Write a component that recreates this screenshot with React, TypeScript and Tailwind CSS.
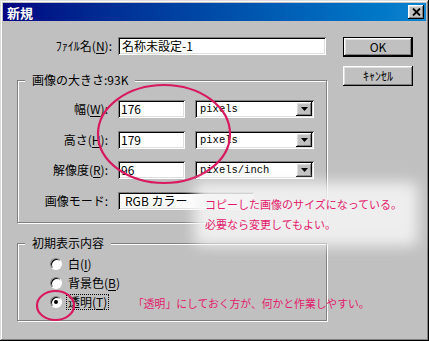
import React from "react";

const raised =
  "shadow-[inset_-1px_-1px_0_#000,inset_1px_1px_0_#fff,inset_-2px_-2px_0_#808080,inset_2px_2px_0_#dfdfdf]";
const sunken =
  "shadow-[inset_1px_1px_0_#808080,inset_-1px_-1px_0_#fff,inset_2px_2px_0_#000,inset_-2px_-2px_0_#dfdfdf]";
const etched = "border border-[#808080] shadow-[1px_1px_0_#fff,inset_1px_1px_0_#fff]";

function Acc({ pre, k, post = ")" }: { pre: string; k: string; post?: string }) {
  return (
    <span>
      {pre}(<span className="underline underline-offset-2">{k}</span>
      {post}
    </span>
  );
}

function Arrow() {
  return (
    <div className={`w-[16px] h-[14px] bg-[#c0c0c0] ${raised} flex items-center justify-center`}>
      <svg width="7" height="4" viewBox="0 0 7 4">
        <path d="M0 0h7L3.5 4z" fill="#000" />
      </svg>
    </div>
  );
}

function Combo({ w, text }: { w: string; text: string }) {
  return (
    <div className={`${w} h-[18px] bg-white ${sunken} flex items-center justify-between pl-[5px] pr-[2px]`}>
      <span className="text-[10.5px] font-['Liberation_Mono',monospace] leading-none">{text}</span>
      <Arrow />
    </div>
  );
}

function Radio({ checked, children, focus }: { checked?: boolean; children: React.ReactNode; focus?: boolean }) {
  return (
    <div className="h-[16px] flex items-center">
      <div className="w-[12px] h-[12px] rounded-full bg-white border border-t-[#808080] border-l-[#808080] border-r-white border-b-white shadow-[inset_1px_1px_0_#000] flex items-center justify-center">
        {checked && <div className="w-[4px] h-[4px] rounded-full bg-black" />}
      </div>
      <div
        className={`ml-[4px] px-[1px] h-[16px] flex items-center ${
          focus ? "border border-dotted border-black" : "border border-transparent"
        }`}
      >
        {children}
      </div>
    </div>
  );
}

export default function App() {
  return (
    <div
      className={`relative w-[429px] h-[341px] bg-[#c0c0c0] p-[3px] overflow-hidden font-['Noto_Sans_CJK_JP',sans-serif] text-[12px] leading-[14px] text-black shadow-[inset_-1px_-1px_0_#000,inset_1px_1px_0_#dfdfdf,inset_-2px_-2px_0_#808080,inset_2px_2px_0_#fff]`}
    >
      {/* title bar */}
      <div className="h-[18px] bg-gradient-to-r from-[#000080] to-[#1084d0] flex items-center justify-between pl-[4px] pr-[2px]">
        <span className="text-white font-bold text-[13px] leading-none">新規</span>
        <div className={`w-[16px] h-[14px] bg-[#c0c0c0] ${raised} flex items-center justify-center`}>
          <svg width="9" height="8" viewBox="0 0 9 8">
            <path d="M1 0.5L8 7.5M8 0.5L1 7.5" stroke="#000" strokeWidth="1.8" />
          </svg>
        </div>
      </div>

      {/* body */}
      <div className="flex pl-[14px] pt-[16px]">
        <div className="w-[310px] flex flex-col">
          {/* file name row */}
          <div className="h-[18px] flex items-center">
            <div className="w-[95px] text-right">
              ﾌｧｲﾙ名<Acc pre="" k="N" />:
            </div>
            <div className={`ml-[6px] w-[208px] h-[18px] bg-white ${sunken} flex items-center pl-[4px]`}>
              名称未設定-1
            </div>
          </div>

          {/* group 1 */}
          <div className={`relative mt-[25px] h-[143px] ${etched} pt-[19px]`}>
            <div className="absolute -top-[8px] left-[7px] px-[7px] bg-[#c0c0c0]">画像の大きさ:93K</div>
            {[
              { l: "幅", k: "W", v: "176", u: "pixels" },
              { l: "高さ", k: "H", v: "179", u: "pixels" },
              { l: "解像度", k: "R", v: "96", u: "pixels/inch" },
            ].map((r, i) => (
              <div key={r.k} className={`h-[18px] flex items-center ${i === 0 ? "" : i === 1 ? "mt-[13px]" : "mt-[12px]"}`}>
                <div className="w-[90px] text-right">
                  {r.l}
                  <Acc pre="" k={r.k} />:
                </div>
                <div className={`ml-[10px] w-[67px] h-[18px] bg-white ${sunken} flex items-center pl-[3px]`}>
                  {r.v}
                </div>
                <div className="ml-[10px]">
                  <Combo w="w-[119px]" text={r.u} />
                </div>
              </div>
            ))}
            <div className="h-[18px] flex items-center mt-[13px]">
              <div className="w-[90px] text-right">画像モード:</div>
              <div className="ml-[10px]">
                <div className={`w-[136px] h-[18px] bg-white ${sunken} flex items-center pl-[7px]`}>RGB カラー</div>
              </div>
            </div>
          </div>

          {/* group 2 */}
          <div className={`relative mt-[20px] h-[78px] ${etched} pt-[12px] pl-[32px] flex flex-col gap-[3px]`}>
            <div className="absolute -top-[8px] left-[7px] px-[7px] bg-[#c0c0c0]">初期表示内容</div>
            <Radio>
              白<Acc pre="" k="I" />
            </Radio>
            <Radio>
              背景色<Acc pre="" k="B" />
            </Radio>
            <Radio checked focus>
              透明<Acc pre="" k="T" />
            </Radio>
          </div>
        </div>

        {/* buttons */}
        <div className="ml-[16px] w-[70px] flex flex-col">
          <div className="h-[20px] border border-black">
            <div className={`h-full bg-[#c0c0c0] ${raised} flex items-center justify-center`}>OK</div>
          </div>
          <div className={`mt-[9px] h-[20px] bg-[#c0c0c0] ${raised} flex items-center justify-center`}>ｷｬﾝｾﾙ</div>
        </div>
      </div>

      {/* annotation overlays */}
      <svg className="absolute left-0 top-0 pointer-events-none" width="429" height="341">
        <ellipse cx="164" cy="134" rx="66" ry="49" fill="none" stroke="#d8185f" strokeWidth="2.2" />
        <ellipse cx="55.5" cy="305.5" rx="18.5" ry="14.5" fill="none" stroke="#d8185f" strokeWidth="2.2" />
      </svg>
      <div className="absolute left-[194px] top-[182px] w-[224px] h-[64px] bg-[#f3f3f3] opacity-90 blur-[7px] rounded-[8px]" />
      <div className="absolute left-[205px] top-[194px] text-[11px] leading-[20px] text-[#e3196b]">
        <div>コピーした画像のサイズになっている。</div>
        <div>必要なら変更してもよい。</div>
      </div>
      <div className="absolute left-[133px] top-[295px] text-[10.8px] leading-[16px] text-[#e3196b]">
        「透明」にしておく方が、何かと作業しやすい。
      </div>
    </div>
  );
}
